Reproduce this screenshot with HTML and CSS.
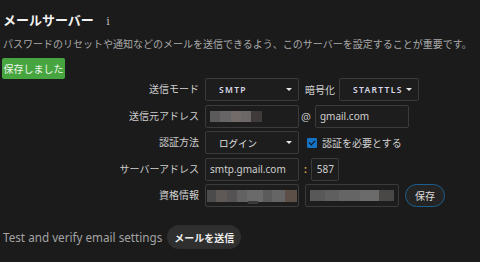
FILE: index.html
```html
<!DOCTYPE html>
<html lang="ja">
<head>
    <meta charset="UTF-8">
    <meta name="viewport" content="width=device-width, initial-scale=1.0">
    <title>メールサーバー</title>
    <link rel="stylesheet" href="styles.css">
</head>
<body>
    <div class="page">
        <!-- Header -->
        <h1 class="title">メールサーバー <span class="info-icon">i</span></h1>
        <p class="desc">パスワードのリセットや通知などのメールを送信できるよう、このサーバーを設定することが重要です。</p>
        <button class="saved-btn">保存しました</button>

        <!-- Settings Form -->
        <div class="form">
            <div class="label">送信モード</div>
            <div class="controls">
                <div class="select wide"><span class="select-text caps">SMTP</span><span class="caret"></span></div>
                <span class="inline-label">暗号化</span>
                <div class="select tls"><span class="select-text caps">STARTTLS</span><span class="caret"></span></div>
            </div>

            <div class="label">送信元アドレス</div>
            <div class="controls">
                <div class="input wide"><span class="blur blur-user"></span></div>
                <span class="at">@</span>
                <div class="input domain">gmail.com</div>
            </div>

            <div class="label">認証方法</div>
            <div class="controls">
                <div class="select wide"><span class="select-text">ログイン</span><span class="caret"></span></div>
                <label class="check"><span class="checkbox"></span>認証を必要とする</label>
            </div>

            <div class="label">サーバーアドレス</div>
            <div class="controls">
                <div class="input wide">smtp.gmail.com</div>
                <span class="colon">:</span>
                <div class="input port">587</div>
            </div>

            <div class="label">資格情報</div>
            <div class="controls">
                <div class="input wide login"><span class="blur blur-login"></span><span class="blur-tail"></span></div>
                <div class="input wide pass"><span class="blur blur-pass"></span></div>
                <button class="save-btn">保存</button>
            </div>
        </div>

        <!-- Test -->
        <div class="test-row">
            <span class="test-text">Test and verify email settings</span>
            <button class="send-btn">メールを送信</button>
        </div>
    </div>
</body>
</html>
```

FILE: styles.css
```css
* {
    box-sizing: border-box;
    margin: 0;
    padding: 0;
    font-family: 'Noto Sans', 'Noto Sans CJK JP', sans-serif;
}

body {
    background: #1b1b1b;
    color: #d2d2d2;
}

.page {
    padding: 10px 2px 0 2px;
}

/* Header */
.title {
    font-size: 13px;
    font-weight: bold;
    line-height: 20px;
    height: 20px;
    color: #f2f2f2;
    padding-left: 1px;
}

.info-icon {
    font-family: 'DejaVu Serif', serif;
    font-weight: normal;
    font-size: 11px;
    color: #bdbdbd;
    margin-left: 9px;
}

.desc {
    margin-top: 7px;
    font-size: 10px;
    line-height: 14px;
    color: #a9a9a9;
    padding-left: 1px;
    white-space: nowrap;
}

.saved-btn {
    margin-top: 7px;
    display: block;
    width: 63px;
    height: 21px;
    border: none;
    border-radius: 2px;
    background: #47a540;
    color: #eef7ec;
    font-size: 10px;
}

/* Form */
.form {
    display: grid;
    grid-template-columns: 197px 1fr;
    grid-auto-rows: 23px;
    column-gap: 6px;
    row-gap: 3.5px;
    margin-top: -1px;
}

.label {
    text-align: right;
    font-size: 10px;
    line-height: 23px;
    color: #cfcfcf;
}

.controls {
    display: flex;
    align-items: center;
    height: 23px;
}

.select,
.input {
    height: 23px;
    border: 1px solid #3b3b3b;
    border-radius: 2px;
    background: #1d1d1d;
    display: flex;
    align-items: center;
    font-size: 10px;
    color: #cfcfcf;
}

.select {
    padding: 0 6px 0 13px;
    justify-content: space-between;
}

.input {
    padding: 0 4px;
}

.wide {
    width: 94px;
}

.tls {
    width: 80px;
}

.domain {
    width: 94px;
}

.port {
    width: 28px;
    padding: 0 5px;
}

.select-text {
    font-size: 9.5px;
    color: #e0e0e0;
}

.caps {
    font-weight: 600;
    font-size: 8.5px;
    letter-spacing: 1.3px;
    color: #d8d8e8;
}

.caret {
    width: 0;
    height: 0;
    border-left: 3px solid transparent;
    border-right: 3px solid transparent;
    border-top: 3px solid #e6e6e6;
}

.inline-label {
    font-size: 10px;
    margin: 0 4px 0 6px;
}

.at {
    font-size: 11px;
    color: #bdbdbd;
    margin: 0 4px 0 2px;
}

.colon {
    font-size: 10px;
    font-weight: bold;
    color: #d9a74a;
    margin: 0 4px 0 5px;
}

.check {
    display: flex;
    align-items: center;
    font-size: 10px;
    color: #d2d2d2;
    margin-left: 8px;
}

.checkbox {
    width: 10px;
    height: 10px;
    background: #1673c4;
    border-radius: 1px;
    margin-right: 5px;
    position: relative;
}

.checkbox::after {
    content: '';
    position: absolute;
    left: 3px;
    top: 1px;
    width: 3px;
    height: 5px;
    border: solid #0d0d0d;
    border-width: 0 1.6px 1.6px 0;
    transform: rotate(45deg);
}

/* Redacted values */
.blur {
    display: block;
    height: 11px;
}

.blur-user {
    width: 52px;
    background: linear-gradient(to right, #5b5b5b 0 20%, #676565 20% 40%, #736b69 40% 60%, #6b6766 60% 78%, #3f3b3b 78% 100%);
}

.login {
    position: relative;
    padding: 0 1px;
}

.pass {
    margin-left: 6px;
}

.blur-login {
    width: 91px;
    height: 12px;
    background: linear-gradient(to right, #4b4b4b 0 10%, #5e5956 10% 22%, #545252 22% 33%, #626262 33% 45%, #6a6a6a 45% 62%, #5b5b5b 62% 72%, #656565 72% 87%, #5b4f48 87% 100%);
}

.blur-tail {
    position: absolute;
    left: 42px;
    top: 16px;
    width: 10px;
    height: 3px;
    background: #3a3a3a;
}

.blur-pass {
    width: 85px;
    height: 11px;
    background: linear-gradient(to right, #585858 0 18%, #5f5f5f 18% 35%, #656565 35% 60%, #6b6b6b 60% 82%, #4a4747 82% 100%);
}

.save-btn {
    margin-left: 6px;
    width: 40px;
    height: 23px;
    border: 1px solid #1c5f8f;
    border-radius: 12px;
    background: #242424;
    color: #dcdcdc;
    font-size: 10px;
}

/* Test row */
.test-row {
    display: flex;
    align-items: center;
    margin-top: 18px;
    padding-left: 1px;
}

.test-text {
    font-size: 11.7px;
    color: #a3a3a3;
}

.send-btn {
    margin-left: 5px;
    width: 74px;
    height: 24px;
    border: none;
    border-radius: 12px;
    background: #2f2f2f;
    color: #f0f0f0;
    font-size: 10px;
    font-weight: bold;
}
```
